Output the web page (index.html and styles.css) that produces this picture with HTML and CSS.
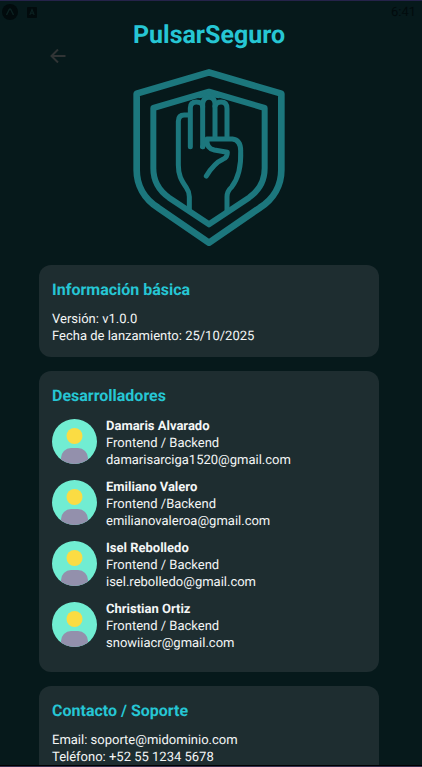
FILE: index.html
```html
<!DOCTYPE html>
<html lang="es">
<head>
    <meta charset="UTF-8">
    <meta name="viewport" content="width=device-width, initial-scale=1.0">
    <title>PulsarSeguro</title>
    <link rel="stylesheet" href="styles.css">
</head>
<body>
    <!-- avatar shared by all developers -->
    <svg width="0" height="0" class="defs" aria-hidden="true">
        <symbol id="avatar" viewBox="0 0 45 45">
            <clipPath id="round"><circle cx="22.5" cy="22.5" r="22.5"/></clipPath>
            <g clip-path="url(#round)">
                <rect width="45" height="45" fill="#71edd2"/>
                <circle cx="22.5" cy="17" r="8" fill="#fbdc43"/>
                <rect x="9" y="29" width="27" height="30" rx="10" fill="#9390ac"/>
            </g>
        </symbol>
    </svg>

    <div class="screen">
        <div class="status-bar">
            <div class="status-icons">
                <svg width="16" height="16" viewBox="0 0 16 16">
                    <circle cx="8" cy="8" r="8" fill="#020b0d"/>
                    <path d="M4.5 11 L7.2 5.5 Q8 4.4 8.8 5.5 L11.5 11" fill="none" stroke="#0c2222" stroke-width="1.4"/>
                </svg>
                <svg width="10" height="12" viewBox="0 0 10 12">
                    <rect y="1" width="10" height="11" rx="1" fill="#020b0d"/>
                    <path d="M2.8 9 L5 3.5 L7.2 9 M3.6 7.2 H6.4" fill="none" stroke="#0c2222" stroke-width="1.1"/>
                </svg>
            </div>
            <span class="time">6:41</span>
        </div>

        <main class="content">
            <h1>PulsarSeguro</h1>
            <button class="back" aria-label="Regresar">
                <svg width="16" height="14" viewBox="0 0 16 14">
                    <path d="M15.5 7 H1.5 M8 0.5 L1.5 7 L8 13.5" fill="none" stroke="#303435" stroke-width="2"/>
                </svg>
            </button>

            <svg class="logo" width="153" height="180" viewBox="24 24 459 540" fill="none" stroke="#1c777d" stroke-linecap="round" stroke-linejoin="round">
                <path stroke-width="20" d="M252 37 L469 101 V330 C469 375 447 416 405 443 L252 548 L99 443 C57 416 35 375 35 330 V101 Z"/>
                <path stroke-width="18" d="M252 95 L419 144 V325 C419 362 402 392 372 413 L252 493 L132 413 C102 392 85 362 85 325 V144 Z"/>
                <g stroke-width="15">
                    <path d="M193 452 V410 Q193 396 184 383 C168 360 160 345 160 315 V184 Q160 165 178 165 H190"/>
                    <path d="M196 260 V144 Q196 126 214 126 Q232 126 233 140"/>
                    <path d="M233 260 V130 Q236 112 252 112 Q268 112 270 130 V230"/>
                    <path d="M270 138 Q274 126 288 126 Q306 126 306 146 V232"/>
                    <path d="M233 260 L246 237 H322 Q347 240 347 272 C349 320 340 355 320 381 Q306 394 306 410 V452"/>
                    <path d="M246 240 Q244 265 268 270 L307 277 Q307 293 295 297 C270 308 256 328 244 348"/>
                </g>
                <path d="M222 113 L252 94 L282 113 L252 108 Z" fill="#1c777d" stroke-width="4"/>
            </svg>

            <section class="card">
                <h2>Información básica</h2>
                <p>Versión: v1.0.0</p>
                <p>Fecha de lanzamiento: 25/10/2025</p>
            </section>

            <section class="card developers">
                <h2>Desarrolladores</h2>
                <div class="developer">
                    <svg class="avatar"><use href="#avatar"/></svg>
                    <div>
                        <p class="name">Damaris Alvarado</p>
                        <p>Frontend / Backend</p>
                        <p>damarisarciga1520@gmail.com</p>
                    </div>
                </div>
                <div class="developer">
                    <svg class="avatar"><use href="#avatar"/></svg>
                    <div>
                        <p class="name">Emiliano Valero</p>
                        <p>Frontend /Backend</p>
                        <p>emilianovaleroa@gmail.com</p>
                    </div>
                </div>
                <div class="developer">
                    <svg class="avatar"><use href="#avatar"/></svg>
                    <div>
                        <p class="name">Isel Rebolledo</p>
                        <p>Frontend / Backend</p>
                        <p>isel.rebolledo@gmail.com</p>
                    </div>
                </div>
                <div class="developer">
                    <svg class="avatar"><use href="#avatar"/></svg>
                    <div>
                        <p class="name">Christian Ortiz</p>
                        <p>Frontend / Backend</p>
                        <p>snowiiacr@gmail.com</p>
                    </div>
                </div>
            </section>

            <section class="card">
                <h2>Contacto / Soporte</h2>
                <p>Email: soporte@midominio.com</p>
                <p>Teléfono: +52 55 1234 5678</p>
            </section>
        </main>
    </div>
</body>
</html>
```
FILE: styles.css
```css
* {
    box-sizing: border-box;
}
body {
    margin: 0;
    background-color: #06191b;
    color: #f4f6f6;
    font-family: Roboto, sans-serif;
    font-size: 13px;
    line-height: 17px;
    text-rendering: geometricPrecision;
}
h1, h2, p {
    margin: 0;
}
.defs {
    position: absolute;
}
.screen {
    display: flex;
    flex-direction: column;
    height: 100vh;
    overflow: hidden;
    border-top: 1px solid #25234a;
    border-bottom: 1px solid #35304f;
}
.status-bar {
    flex: none;
    display: flex;
    justify-content: space-between;
    align-items: center;
    height: 20px;
    padding: 2px 6px 0 2px;
    color: #020b0d;
}
.status-icons {
    display: flex;
    align-items: center;
    gap: 9px;
}
.content {
    flex: 1;
    min-height: 0;
    display: flex;
    flex-direction: column;
    padding: 0 43px 0 39px;
    overflow: hidden;
    border-bottom: 1px solid #000;
}
.content > * {
    flex: none;
}
h1 {
    color: #26c6d4;
    font-size: 25px;
    line-height: 30px;
    text-align: center;
}
.back {
    align-self: flex-start;
    height: 14px;
    margin: -2px 0 0 11px;
    padding: 0;
    border: none;
    background: none;
    cursor: pointer;
}
.back svg {
    display: block;
}
.logo {
    align-self: center;
    margin: 5px 0 17px;
}
.card {
    margin-bottom: 14px;
    padding: 13px 13px 12px;
    border-radius: 12px;
    background-color: #1e2d30;
}
.card h2 {
    margin-bottom: 9px;
    color: #26c6d4;
    font-size: 16px;
    line-height: 24px;
}
.developers {
    padding-bottom: 10px;
}
.developers h2 {
    margin-bottom: 10px;
}
.developer {
    display: flex;
    gap: 9px;
    margin-bottom: 10px;
}
.avatar {
    width: 45px;
    height: 45px;
    margin-top: 1px;
}
.name {
    font-weight: bold;
}
```
